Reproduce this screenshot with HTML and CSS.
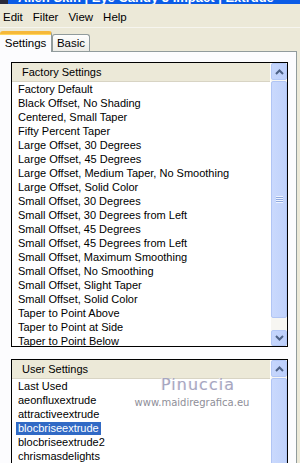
FILE: index.html
```html
<!DOCTYPE html>
<html lang="en">
<head>
  <meta charset="UTF-8">
  <title>Extrude</title>
  <link rel="stylesheet" href="styles.css">
</head>
<body>
  <div class="window">
    <div class="titlebar">
      <span class="app-icon"></span>
      <span class="title">Alien Skin | Eye Candy 5 Impact | Extrude</span>
    </div>
    <div class="menubar">
      <span>Edit</span>
      <span>Filter</span>
      <span>View</span>
      <span>Help</span>
    </div>
    <div class="tabs">
      <div class="tab active">Settings</div>
      <div class="tab">Basic</div>
    </div>
    <div class="panel">
      <div class="listbox factory">
        <div class="lb-main">
          <div class="lb-head">Factory Settings</div>
          <ul class="lb-items">
            <li><span>Factory Default</span></li>
            <li><span>Black Offset, No Shading</span></li>
            <li><span>Centered, Small Taper</span></li>
            <li><span>Fifty Percent Taper</span></li>
            <li><span>Large Offset, 30 Degrees</span></li>
            <li><span>Large Offset, 45 Degrees</span></li>
            <li><span>Large Offset, Medium Taper, No Smoothing</span></li>
            <li><span>Large Offset, Solid Color</span></li>
            <li><span>Small Offset, 30 Degrees</span></li>
            <li><span>Small Offset, 30 Degrees from Left</span></li>
            <li><span>Small Offset, 45 Degrees</span></li>
            <li><span>Small Offset, 45 Degrees from Left</span></li>
            <li><span>Small Offset, Maximum Smoothing</span></li>
            <li><span>Small Offset, No Smoothing</span></li>
            <li><span>Small Offset, Slight Taper</span></li>
            <li><span>Small Offset, Solid Color</span></li>
            <li><span>Taper to Point Above</span></li>
            <li><span>Taper to Point at Side</span></li>
            <li><span>Taper to Point Below</span></li>
          </ul>
        </div>
        <div class="scrollbar">
          <div class="sb-btn">
            <svg width="9" height="6" viewBox="0 0 9 6"><path d="M1 5 L4.5 1.5 L8 5" fill="none" stroke="#4d6185" stroke-width="2"/></svg>
          </div>
          <div class="sb-thumb">
            <span class="grip"></span>
          </div>
          <div class="sb-track"></div>
          <div class="sb-btn">
            <svg width="9" height="6" viewBox="0 0 9 6"><path d="M1 1 L4.5 4.5 L8 1" fill="none" stroke="#4d6185" stroke-width="2"/></svg>
          </div>
        </div>
      </div>

      <div class="listbox user">
        <div class="lb-main">
          <div class="lb-head">User Settings</div>
          <ul class="lb-items">
            <li><span>Last Used</span></li>
            <li><span>aeonfluxextrude</span></li>
            <li><span>attractiveextrude</span></li>
            <li class="selected"><span>blocbriseextrude</span></li>
            <li><span>blocbriseextrude2</span></li>
            <li><span>chrismasdelights</span></li>
          </ul>
        </div>
        <div class="scrollbar">
          <div class="sb-btn">
            <svg width="9" height="6" viewBox="0 0 9 6"><path d="M1 5 L4.5 1.5 L8 5" fill="none" stroke="#4d6185" stroke-width="2"/></svg>
          </div>
          <div class="sb-thumb"></div>
        </div>
      </div>
    </div>

    <div class="watermark">
      <div class="wm-name">Pinuccia</div>
      <div class="wm-url">www.maidiregrafica.eu</div>
    </div>
  </div>
</body>
</html>
```

FILE: styles.css
```css
body { margin: 0; background: #ece9d8; overflow: hidden; font-family: "Liberation Sans", Arial, sans-serif; font-size: 11px; color: #000; }
.window { position: relative; width: 300px; height: 463px; overflow: hidden; background: #ece9d8; }

/* title bar, mostly cut off by the capture */
.titlebar { height: 4px; overflow: hidden; background: #0b5ce6; display: flex; align-items: flex-start; }
.app-icon { width: 8px; height: 4px; background: #2a2a3a; margin-right: 10px; flex: none; }
.title { display: block; margin-top: -9px; line-height: 13px; font-size: 13px; font-weight: bold; color: #fff; white-space: nowrap; }

/* menu */
.menubar { height: 24px; display: flex; align-items: center; gap: 10px; padding: 2px 0 0 3px; box-sizing: border-box; border-bottom: 1px solid #f6f5ef; font-size: 11.5px; }

/* tabs */
.tabs { height: 23px; display: flex; align-items: flex-end; }
.tab { box-sizing: border-box; height: 17px; width: 38px; text-align: center; line-height: 16px; font-size: 11.5px; border: 1px solid #919b9c; border-bottom: none; border-radius: 3px 3px 0 0; background: linear-gradient(#fefefe, #ecebe6); }
.tab.active { position: relative; z-index: 1; width: 52px; height: 21px; margin-bottom: -1px; line-height: 19px; background: #fcfcfe; border-left: none; border-top: 3px solid #f6b83a; box-shadow: inset 0 1px 0 #ffd75e; }

.panel { box-sizing: border-box; width: 297px; height: 420px; background: #fcfcfe; border-top: 1px solid #919b9c; border-right: 1px solid #919b9c; padding: 10px 0 0 11px; }

/* list boxes */
.listbox { box-sizing: border-box; width: 277px; display: flex; border: 1px solid #000; background: #fff; }
.listbox.factory { height: 285px; }
.listbox.user { height: 140px; margin-top: 12px; }
.lb-main { flex: 1; min-width: 0; display: flex; flex-direction: column; }
.lb-head { height: 18px; line-height: 18px; padding-left: 10px; background: #ece9d8; border-bottom: 1px solid #d8d4c4; }
.lb-items { list-style: none; margin: 0; padding: 0; flex: 1; overflow: hidden; }
.lb-items li { height: 14px; line-height: 14px; padding-left: 4px; white-space: nowrap; }
.lb-items li span { display: inline-block; padding: 0 2px; line-height: 13px; }
.lb-items li.selected span { background: #316ac5; color: #fff; }

/* scrollbar */
.scrollbar { width: 16px; flex: none; display: flex; flex-direction: column; gap: 1px; background: #f7f6f2; border-left: 1px solid #fff; }
.sb-btn { box-sizing: border-box; height: 17px; display: flex; align-items: center; justify-content: center; background: linear-gradient(90deg, #c6d6fc, #bccffb); border: 1px solid #b4c8f6; border-radius: 2px; }
.factory .sb-btn:last-child { height: 16px; margin-top: auto; }
.sb-thumb { box-sizing: border-box; height: 237px; display: flex; align-items: center; justify-content: center; background: linear-gradient(90deg, #cad9fd, #c0d2fb); border: 1px solid #b1c5f4; border-radius: 2px; }
.user .sb-thumb { height: 120px; }
.grip { width: 7px; height: 7px; background: repeating-linear-gradient(#eef3fe 0 1px, #8fa9e0 1px 2px); }
.sb-track { flex: 1; }

/* watermark over the user list */
.watermark { position: absolute; left: 130px; top: 376px; width: 124px; text-align: center; font-family: "DejaVu Sans", sans-serif; }
.wm-name { font-size: 16px; line-height: 17px; letter-spacing: 1px; color: #a7a6c0; text-shadow: 1px 1px 0 #fff, -1px 0 0 #eeeef4; padding-left: 12px; }
.wm-url { font-size: 10px; line-height: 14px; color: #8e8e98; margin-top: 3px; }
```
